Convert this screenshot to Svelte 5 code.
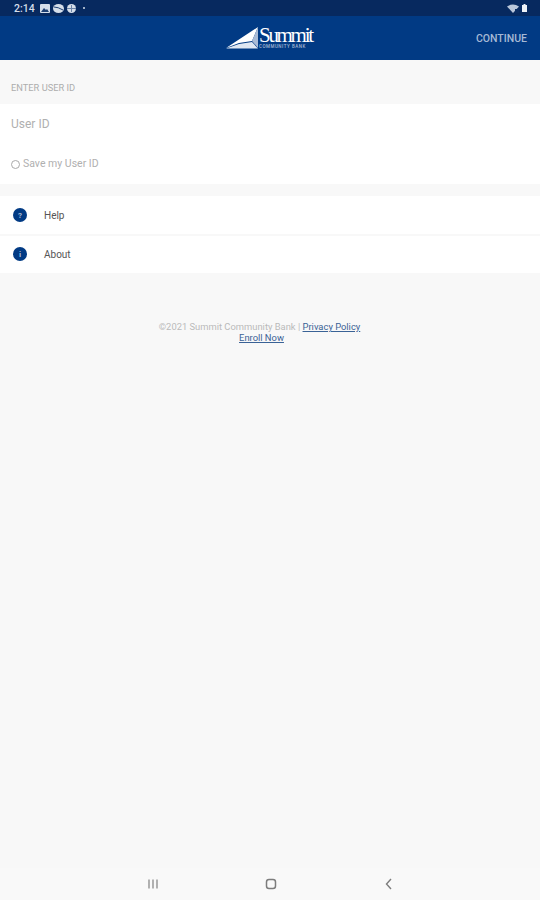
<script>
	const links = [
		{ label: 'Help', glyph: '?' },
		{ label: 'About', glyph: 'i' }
	];
</script>

<div class="screen">
	<div class="status-bar">
		<div class="status-left">
			<span class="time">2:14</span>
			<svg width="10" height="9" viewBox="0 0 10 9"><rect width="10" height="9" rx="1" fill="#d5deea" /><path d="M1 8 4 4l2 2 1-1 2 3z" fill="#1d3f73" /></svg>
			<svg width="11" height="9" viewBox="0 0 11 9"><ellipse cx="5.500" cy="4.500" rx="5.500" ry="4.500" fill="#d5deea" /><path d="M1 3q4 0 9 3" stroke="#1d3f73" fill="none" /></svg>
			<svg width="9" height="9" viewBox="0 0 9 9"><circle cx="4.500" cy="4.500" r="4.500" fill="#d5deea" /><path d="M0 4.500h9M4.500 1v7" stroke="#6c84a8" /></svg>
			<span class="dot"></span>
		</div>
		<div class="status-right">
			<svg width="12" height="9" viewBox="0 0 12 9"><path d="M0 2.500Q6-1.500 12 2.500L6 9z" fill="#b9c6da" /><path d="M8 5h4v4H8z" fill="#0b2d63" /></svg>
			<svg width="5" height="8" viewBox="0 0 5 8"><path d="M1.500 0h2v1H5v7H0V1h1.500z" fill="#eef2f7" /></svg>
		</div>
	</div>

	<header class="toolbar">
		<div class="logo">
			<svg width="33" height="22" viewBox="0 0 33 22">
				<path d="M0 21 32 0 26 14 13 16z" fill="#fff" />
				<path d="M0 21.500 13 17l13-2 6 6.500z" fill="#dfe7f2" />
				<path d="M26 14 32 0v21z" fill="#a9bbd6" />
			</svg>
			<div class="logo-text">
				<span class="logo-name">Summit</span>
				<span class="logo-sub">COMMUNITY BANK</span>
			</div>
		</div>
		<span class="continue">CONTINUE</span>
	</header>

	<main class="content">
		<div class="section-label">ENTER USER ID</div>

		<section class="login-card">
			<div class="user-field">User ID</div>
			<label class="save-row">
				<span class="radio"></span>
				Save my User ID
			</label>
		</section>

		<section class="link-list">
			{#each links as link}
				<div class="link-row">
					<span class="badge">{link.glyph}</span>
					<span>{link.label}</span>
				</div>
			{/each}
		</section>

		<footer class="legal">
			<div>©2021 Summit Community Bank | <a href="#privacy">Privacy Policy</a></div>
			<div class="enroll"><a href="#enroll">Enroll Now</a></div>
		</footer>
	</main>

	<nav class="nav-bar">
		<svg width="12" height="12" viewBox="0 0 12 12"><path d="M2 1.500v9M6 1.500v9M10 1.500v9" stroke="#8a8a8a" stroke-width="1.300" /></svg>
		<svg width="12" height="12" viewBox="0 0 12 12"><rect x="1.500" y="1.500" width="9" height="9" rx="2.500" fill="none" stroke="#7d7d7d" stroke-width="1.500" /></svg>
		<svg width="12" height="12" viewBox="0 0 12 12"><path d="M8 1 3.500 6 8 11" fill="none" stroke="#7d7d7d" stroke-width="1.400" /></svg>
	</nav>
</div>

<style>
	:global(body) {
		background: #f8f8f8;
	}

	.screen {
		width: 540px;
		height: 900px;
		display: flex;
		flex-direction: column;
		overflow: hidden;
		font-family: Roboto, "Liberation Sans", sans-serif;
	}

	.status-bar {
		height: 16px;
		background: #07295f;
		display: flex;
		align-items: center;
		justify-content: space-between;
		padding: 0 13px 0 14px;
	}

	.status-left,
	.status-right {
		display: flex;
		align-items: center;
		gap: 3px;
	}

	.time {
		color: #d5deea;
		font-size: 10.500px;
		font-weight: 500;
		margin-right: 2px;
	}

	.dot {
		width: 2.500px;
		height: 2.500px;
		margin-left: 4px;
		border-radius: 50%;
		background: #d5deea;
	}

	.toolbar {
		height: 44px;
		background: #013a84;
		display: flex;
		align-items: center;
		justify-content: flex-end;
		padding-right: 13px;
		position: relative;
	}

	.logo {
		position: absolute;
		left: 226px;
		top: 11px;
		display: flex;
		align-items: flex-end;
	}

	.logo-text {
		display: flex;
		flex-direction: column;
		gap: 1px;
	}

	.logo-name {
		color: #fff;
		font-family: "Liberation Serif", serif;
		font-size: 21px;
		line-height: 15px;
		letter-spacing: -2.300px;
	}

	.logo-sub {
		color: #a8bbd6;
		font-size: 4.500px;
		line-height: 5px;
		font-weight: 500;
		letter-spacing: 0.500px;
	}

	.continue {
		color: #a6b9d5;
		font-size: 10.500px;
		font-weight: 500;
	}

	.content {
		flex: 1;
		background: #f8f8f8;
	}

	.section-label {
		height: 44px;
		padding: 23px 0 0 11px;
		box-sizing: border-box;
		color: #adadad;
		font-size: 9.300px;
		line-height: 10px;
	}

	.login-card {
		height: 80px;
		background: #fff;
		padding-left: 11px;
		color: #b0b0b0;
	}

	.user-field {
		font-size: 12px;
		line-height: 14px;
		padding-top: 13px;
	}

	.save-row {
		display: flex;
		align-items: center;
		gap: 3px;
		font-size: 10.500px;
		line-height: 12px;
		margin-top: 27px;
	}

	.radio {
		width: 7px;
		height: 7px;
		border: 1px solid #a9a9a9;
		border-radius: 50%;
	}

	.link-list {
		margin-top: 12px;
		display: flex;
		flex-direction: column;
		gap: 2px;
	}

	.link-row {
		height: 38px;
		background: #fff;
		display: flex;
		align-items: center;
		padding-left: 13px;
		font-size: 10px;
		color: #555;
	}

	.link-row + .link-row {
		height: 36px;
		padding-bottom: 1px;
	}

	.badge {
		width: 14px;
		height: 14px;
		margin-right: 17px;
		border-radius: 50%;
		background: #013a84;
		color: #a9bbd6;
		font-size: 8px;
		font-weight: 700;
		display: flex;
		align-items: center;
		justify-content: center;
	}

	.legal {
		margin-top: 48px;
		padding-right: 21px;
		text-align: center;
		font-size: 9.400px;
		line-height: 11px;
		color: #bababa;
	}

	.legal a {
		color: #3a6296;
	}

	.enroll {
		padding-left: 4px;
	}

	.nav-bar {
		height: 32px;
		background: #f9f9f9;
		display: grid;
		grid-template-columns: repeat(3, 118px);
		justify-content: center;
		justify-items: center;
		align-items: center;
		padding-left: 2px;
	}
</style>
